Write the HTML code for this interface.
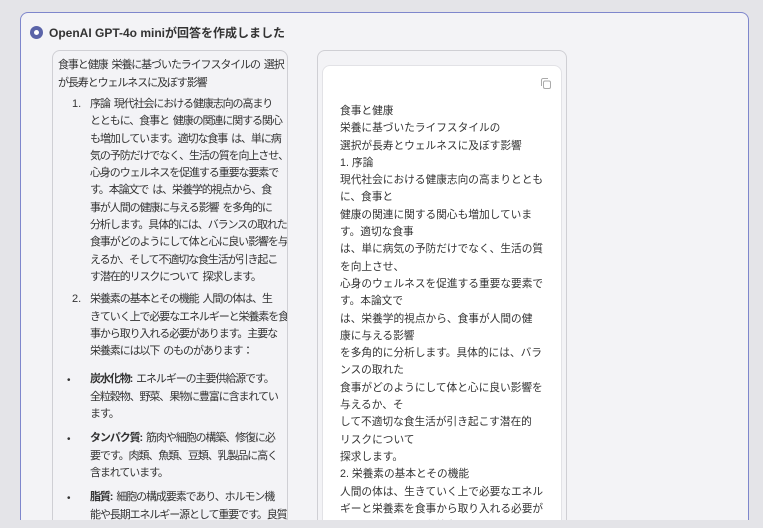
<!DOCTYPE html>
<html><head><meta charset="utf-8"><style>
*{margin:0;padding:0;box-sizing:border-box}
html,body{width:763px;height:528px;overflow:hidden}
body{background:#e4e4e8;font-family:"Liberation Sans","Noto Sans CJK JP",sans-serif;color:#333;position:relative}
.card{position:absolute;left:20px;top:12px;width:729px;height:530px;border:1px solid #7e86cc;border-radius:8px;background:#f3f3f6}
.hdr{position:absolute;left:30px;top:24px;font-size:12px;font-weight:bold;color:#333;display:flex;align-items:center}
.dot{width:13px;height:13px;border-radius:50%;background:#5a63a8;margin-right:6px;position:relative}
.dot:after{content:"";position:absolute;left:4px;top:4px;width:5px;height:5px;border-radius:50%;background:#fff}
.lp{position:absolute;left:52px;top:50px;width:236px;height:490px;border:1px solid #cfcfd4;border-radius:8px;font-size:11px;letter-spacing:-1.1px;word-spacing:2px;line-height:17.3px;color:#333;padding:5px 0 0 5px;overflow:hidden}
.lp p{white-space:nowrap}
.num{position:absolute;left:14px;top:0;letter-spacing:0}
.bl{position:absolute;left:9px;font-size:10px}
.lp .m{margin-left:32px}
.rp{position:absolute;left:317px;top:50px;width:250px;height:490px;border:1px solid #cfcfd4;border-radius:8px}
.ri{position:absolute;left:4px;top:14px;width:240px;height:480px;background:#fff;border:1px solid #e2e2e6;border-radius:8px;font-size:10.7px;line-height:17.3px;padding:37px 0 0 17px;white-space:nowrap;color:#333;overflow:hidden}
.cp{position:absolute;right:10px;top:12px;width:10px;height:11px}
.bot{position:absolute;left:0;top:520px;width:763px;height:8px;background:#e4e4e8}
.g{position:relative;margin-top:4px}
.b{position:relative;margin-top:7px}
</style></head><body>
<div class="card"></div>
<div class="hdr"><span class="dot"></span>OpenAI GPT-4o miniが回答を作成しました</div>
<div class="lp">
<p style="line-height:18px">食事と健康 栄養に基づいたライフスタイルの 選択</p>
<p style="line-height:18px">が長寿とウェルネスに及ぼす影響</p>
<div class="g">
<span class="num">1.</span>
<p class="m">序論 現代社会における健康志向の高まり</p>
<p class="m">とともに、食事と 健康の関連に関する関心</p>
<p class="m">も増加しています。適切な食事 は、単に病</p>
<p class="m">気の予防だけでなく、生活の質を向上させ、</p>
<p class="m">心身のウェルネスを促進する重要な要素で</p>
<p class="m">す。本論文で は、栄養学的視点から、食</p>
<p class="m">事が人間の健康に与える影響 を多角的に</p>
<p class="m">分析します。具体的には、バランスの取れた</p>
<p class="m">食事がどのようにして体と心に良い影響を与</p>
<p class="m">えるか、そして不適切な食生活が引き起こ</p>
<p class="m">す潜在的リスクについて 探求します。</p>
</div>
<div class="g" style="margin-top:5px">
<span class="num">2.</span>
<p class="m">栄養素の基本とその機能 人間の体は、生</p>
<p class="m">きていく上で必要なエネルギーと栄養素を食</p>
<p class="m">事から取り入れる必要があります。主要な</p>
<p class="m">栄養素には以下 のものがあります：</p>
</div>
<div class="b" style="margin-top:11px">
<span class="bl" style="top:1px">•</span>
<p class="m"><b>炭水化物:</b> エネルギーの主要供給源です。</p>
<p class="m">全粒穀物、野菜、果物に豊富に含まれてい</p>
<p class="m">ます。</p>
</div>
<div class="b">
<span class="bl" style="top:1px">•</span>
<p class="m"><b>タンパク質:</b> 筋肉や細胞の構築、修復に必</p>
<p class="m">要です。肉類、魚類、豆類、乳製品に高く</p>
<p class="m">含まれています。</p>
</div>
<div class="b">
<span class="bl" style="top:1px">•</span>
<p class="m"><b>脂質:</b> 細胞の構成要素であり、ホルモン機</p>
<p class="m">能や長期エネルギー源として重要です。良質</p>
</div>
</div>
<div class="rp"><div class="ri">
<svg class="cp" viewBox="0 0 10 11"><rect x="2.5" y="3" width="7" height="7.5" rx="1.5" fill="none" stroke="#aaa" stroke-width="1"/><path d="M0.5 8V2a1.5 1.5 0 0 1 1.5-1.5h5" fill="none" stroke="#aaa" stroke-width="1"/></svg>
食事と健康<br>栄養に基づいたライフスタイルの<br>選択が長寿とウェルネスに及ぼす影響<br>1. 序論<br>現代社会における健康志向の高まりととも<br>に、食事と<br>健康の関連に関する関心も増加していま<br>す。適切な食事<br>は、単に病気の予防だけでなく、生活の質<br>を向上させ、<br>心身のウェルネスを促進する重要な要素で<br>す。本論文で<br>は、栄養学的視点から、食事が人間の健<br>康に与える影響<br>を多角的に分析します。具体的には、バラ<br>ンスの取れた<br>食事がどのようにして体と心に良い影響を<br>与えるか、そ<br>して不適切な食生活が引き起こす潜在的<br>リスクについて<br>探求します。<br>2. 栄養素の基本とその機能<br>人間の体は、生きていく上で必要なエネル<br>ギーと栄養素を食事から取り入れる必要が<br>あります。主要な栄養素には以下
</div></div>
<div class="bot"></div>
</body></html>
